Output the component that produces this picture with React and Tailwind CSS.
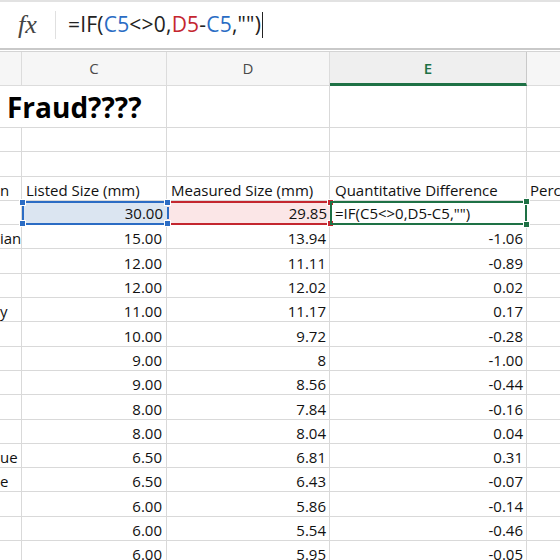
import React from 'react';

const cols = 'grid grid-cols-[22px_145px_163px_197px_1fr]';
const font = { fontFamily: '"Open Sans", "Noto Sans", sans-serif' };

const rows = [
  ['', '15.00', '13.94', '-1.06', 'ian'],
  ['', '12.00', '11.11', '-0.89', ''],
  ['', '12.00', '12.02', '0.02', ''],
  ['', '11.00', '11.17', '0.17', 'y'],
  ['', '10.00', '9.72', '-0.28', ''],
  ['', '9.00', '8', '-1.00', ''],
  ['', '9.00', '8.56', '-0.44', ''],
  ['', '8.00', '7.84', '-0.16', ''],
  ['', '8.00', '8.04', '0.04', ''],
  ['', '6.50', '6.81', '0.31', 'ue'],
  ['', '6.50', '6.43', '-0.07', 'e'],
  ['', '6.00', '5.86', '-0.14', ''],
  ['', '6.00', '5.54', '-0.46', ''],
  ['', '6.00', '5.95', '-0.05', ''],
];

function Cell({ children, className = '' }) {
  return (
    <div className={`h-[24.3px] border-r border-b border-[#d9d9d9] flex items-end overflow-hidden whitespace-nowrap text-[15px] leading-[20px] text-[#111] ${className}`}>
      {children}
    </div>
  );
}

function Handle({ className }) {
  return <span className={`absolute w-[7px] h-[7px] ${className}`} />;
}

export default function App() {
  return (
    <div className="w-[560px] h-[560px] overflow-hidden bg-white" style={font}>
      {/* formula bar */}
      <div className="h-[2px] bg-[#e2e2e2]" />
      <div className="h-[46px] flex items-center bg-white">
        <div className="w-[55px] flex justify-center">
          <span className="text-[26px] italic text-[#444] -mt-[2px]" style={{ fontFamily: '"Liberation Serif", serif' }}>fx</span>
        </div>
        <div className="w-px h-[28px] bg-[#e0e0e0]" />
        <div className="pl-[12px] text-[21px] text-[#222] flex items-center tracking-[0.2px]">
          <span>=IF(</span>
          <span className="text-[#2a6cc4]">C5</span>
          <span>&lt;&gt;0,</span>
          <span className="text-[#c4262f]">D5</span>
          <span>-</span>
          <span className="text-[#2a6cc4]">C5</span>
          <span>,""</span>
          <span>)</span>
          <span className="w-px h-[26px] bg-[#222] ml-[1px]" />
        </div>
      </div>
      <div className="h-[2px] bg-[#c9c9c9]" />
      <div className="h-[1px] bg-white" />
      <div className="h-[1px] bg-[#d4d4d4]" />

      {/* column headers */}
      <div className={`${cols} h-[34px] bg-[#f6f6f6] text-[15px] text-[#4a4a4a]`}>
        <div className="border-r border-b border-[#dcdcdc]" />
        <div className="border-r border-b border-[#dcdcdc] flex items-center justify-center">C</div>
        <div className="border-r border-b border-[#dcdcdc] flex items-center justify-center">D</div>
        <div className="border-r border-[#c9c9c9] border-b-[3px] border-b-[#1e7145] bg-[#efefef] flex items-center justify-center text-[#1e7145] font-semibold pt-[2px]">E</div>
        <div className="border-b border-[#dcdcdc]" />
      </div>

      {/* title row */}
      <div className={`${cols} h-[42px]`}>
        <div className="col-span-2 border-r border-b border-[#d9d9d9] flex items-end pl-[7px] pb-[3px] text-[28px] font-bold text-black leading-[34px] whitespace-nowrap">
          Fraud????
        </div>
        <div className="border-r border-b border-[#d9d9d9]" />
        <div className="border-r border-b border-[#d9d9d9]" />
        <div className="border-b border-[#d9d9d9]" />
      </div>

      {/* blank rows */}
      {[0, 1].map((i) => (
        <div key={i} className={cols}>
          <Cell />
          <Cell />
          <Cell />
          <Cell />
          <Cell className="border-r-0" />
        </div>
      ))}

      {/* heading row */}
      <div className={cols}>
        <Cell>n</Cell>
        <Cell className="pl-[4px]">Listed Size (mm)</Cell>
        <Cell className="pl-[4px]">Measured Size (mm)</Cell>
        <Cell className="pl-[5px]">Quantitative Difference</Cell>
        <Cell className="border-r-0 pl-[3px]">Perc</Cell>
      </div>

      {/* selected row */}
      <div className={cols}>
        <Cell />
        <div className="relative h-[24.3px] bg-[#dbe5f1] border-y-2 border-[#2b6cc4] flex items-end justify-end pr-[4px] text-[15px] leading-[20px] text-[#111]">
          <span className="absolute left-0 top-[3px] bottom-[3px] w-[2px] bg-[#2b6cc4]" />
          30.00
          <Handle className="-left-[3px] -top-[4px] bg-[#2b6cc4] border border-white" />
          <Handle className="-left-[3px] -bottom-[4px] bg-[#2b6cc4] border border-white" />
          <Handle className="-right-[4px] -top-[4px] bg-[#2b6cc4] border border-white z-10" />
          <Handle className="-right-[4px] -bottom-[4px] bg-[#2b6cc4] border border-white z-10" />
          <span className="absolute -right-[2px] top-[4px] bottom-[4px] w-[2px] bg-[#2b6cc4] z-10" />
        </div>
        <div className="relative h-[24.3px] bg-[#fbe6e7] border-y-2 border-[#c4262f] flex items-end justify-end pr-[3px] text-[15px] leading-[20px] text-[#111]">
          29.85
          <Handle className="-right-[4px] -top-[4px] bg-[#c4262f] border border-white" />
          <Handle className="-right-[4px] -bottom-[4px] bg-[#c4262f] border border-white" />
        </div>
        <div className="relative h-[24.3px] border-2 border-[#1e7145] flex items-end pl-[3px] text-[15px] leading-[20px] text-[#111] whitespace-nowrap z-20">
          =IF(C5&lt;&gt;0,D5-C5,"")
          <Handle className="-right-[5px] -top-[5px] bg-[#1e7145] border border-white" />
          <Handle className="-right-[5px] -bottom-[5px] bg-[#1e7145] border border-white" />
        </div>
        <Cell className="border-r-0" />
      </div>

      {/* data rows */}
      {rows.map((r, i) => (
        <div key={i} className={cols}>
          <Cell>{r[4]}</Cell>
          <Cell className="justify-end pr-[4px]">{r[1]}</Cell>
          <Cell className="justify-end pr-[3px]">{r[2]}</Cell>
          <Cell className="justify-end pr-[3px]">{r[3]}</Cell>
          <Cell className="border-r-0" />
        </div>
      ))}
    </div>
  );
}
